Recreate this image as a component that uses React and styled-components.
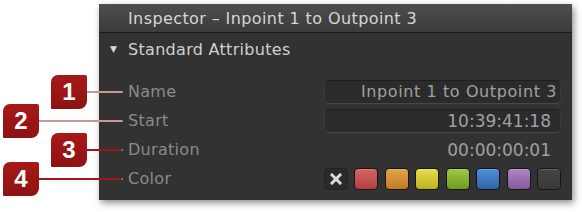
import React from "react";
import styled, { createGlobalStyle } from "styled-components";

const GlobalStyle = createGlobalStyle`
  html, body {
    margin: 0;
    padding: 0;
    background: #ffffff;
  }
  body {
    font-family: "DejaVu Sans", "Liberation Sans", sans-serif;
  }
`;

const Page = styled.div`
  width: 582px;
  height: 212px;
  padding: 4px 0 0 99px;
  box-sizing: border-box;
`;

const Panel = styled.div`
  width: 473px;
  height: 196px;
  background: #323232;
  box-shadow: 2px 3px 7px rgba(0, 0, 0, 0.45);
  display: flex;
  flex-direction: column;
`;

const TitleBar = styled.div`
  height: 28px;
  display: flex;
  align-items: center;
  padding-left: 29px;
  background: linear-gradient(#4e4e4e, #3b3b3b);
  border-bottom: 1px solid #1c1c1c;
  color: #d6d6d6;
  font-size: 16px;
  letter-spacing: 0.4px;
  white-space: nowrap;
`;

const SectionHeader = styled.div`
  height: 32px;
  display: flex;
  align-items: center;
  padding-left: 11px;
  color: #d0d0d0;
  font-size: 16px;
  letter-spacing: 0.3px;
`;

const Disclosure = styled.span`
  width: 18px;
  font-size: 9px;
  color: #d8d8d8;
`;

const Rows = styled.div`
  padding-top: 12px;
  display: flex;
  flex-direction: column;
`;

const Row = styled.div`
  position: relative;
  height: 29px;
  display: grid;
  grid-template-columns: 196px 237px;
  align-items: center;
  padding-left: 29px;
`;

const Label = styled.span`
  color: #8a8a8a;
  font-size: 16px;
  letter-spacing: 0.3px;
`;

const Field = styled.div`
  height: 24px;
  box-sizing: border-box;
  display: flex;
  align-items: center;
  justify-content: flex-end;
  padding-right: ${(p) => p.$pad}px;
  border-radius: 5px;
  background: #2b2b2b;
  border: 1px solid #3a3a3a;
  border-top-color: #1e1e1e;
  border-bottom-color: #474747;
  color: #a0a0a0;
  font-size: ${(p) => p.$size}px;
  letter-spacing: ${(p) => p.$track}px;
  white-space: nowrap;
  overflow: hidden;
`;

const Value = styled.div`
  text-align: right;
  padding-right: 10px;
  color: #a0a0a0;
  font-size: 17px;
`;

const Swatches = styled.div`
  display: flex;
  justify-content: space-between;
`;

const Swatch = styled.div`
  width: 24px;
  height: 22px;
  box-sizing: border-box;
  border-radius: 4px;
  border: 1px solid #161616;
  background: linear-gradient(
    ${(p) => p.$top},
    ${(p) => p.$bottom}
  );
  box-shadow: inset 0 1px 0 rgba(255, 255, 255, 0.18);
`;

const NoColor = styled.div`
  width: 24px;
  height: 22px;
  box-sizing: border-box;
  border-radius: 4px;
  border: 1px solid #222222;
  background: #2a2a2a;
  display: flex;
  align-items: center;
  justify-content: center;
`;

const Callout = styled.div`
  position: absolute;
  left: ${(p) => p.$left}px;
  right: calc(100% - 23px);
  top: 50%;
  transform: translateY(-50%);
  display: flex;
  align-items: center;
`;

const Badge = styled.div`
  width: 36px;
  height: 34px;
  flex: none;
  display: flex;
  align-items: center;
  justify-content: center;
  background: linear-gradient(#a81818, #8e1212);
  border-radius: 7px 2px 8px 1px;
  color: #ffffff;
  font-family: "Liberation Sans", Arial, sans-serif;
  font-weight: bold;
  font-size: 24px;
`;

const Leader = styled.div`
  flex: 1;
  height: 2px;
  background: ${(p) => p.$color};
  border-radius: 0 1px 1px 0;
  box-shadow: 1px 0 0 rgba(255, 255, 255, 0.55);
`;

const swatches = [
  ["#d86464", "#b04040"],
  ["#e4a448", "#c07c20"],
  ["#e6dc4c", "#c0b020"],
  ["#9cc844", "#6e9c20"],
  ["#5090dc", "#3062a8"],
  ["#b084c4", "#84589c"],
  ["#444444", "#383838"],
];

const rows = [
  { n: 1, left: -48, line: "#cf9494" },
  { n: 2, left: -96, line: "#cf9494" },
  { n: 3, left: -48, line: "#a01616" },
  { n: 4, left: -96, line: "#a01616" },
];

function CalloutMark({ row }) {
  return (
    <Callout $left={row.left}>
      <Badge>{row.n}</Badge>
      <Leader $color={row.line} />
    </Callout>
  );
}

export default function App() {
  return (
    <>
      <GlobalStyle />
      <Page>
        <Panel>
          <TitleBar>Inspector – Inpoint 1 to Outpoint 3</TitleBar>
          <SectionHeader>
            <Disclosure>▼</Disclosure>
            Standard Attributes
          </SectionHeader>
          <Rows>
            <Row>
              <CalloutMark row={rows[0]} />
              <Label>Name</Label>
              <Field $pad={3} $size={16} $track={0.6}>
                Inpoint 1 to Outpoint 3
              </Field>
            </Row>
            <Row>
              <CalloutMark row={rows[1]} />
              <Label>Start</Label>
              <Field $pad={9} $size={17} $track={0}>
                10:39:41:18
              </Field>
            </Row>
            <Row>
              <CalloutMark row={rows[2]} />
              <Label>Duration</Label>
              <Value>00:00:00:01</Value>
            </Row>
            <Row>
              <CalloutMark row={rows[3]} />
              <Label>Color</Label>
              <Swatches>
                <NoColor>
                  <svg width="12" height="12" viewBox="0 0 12 12">
                    <path
                      d="M2 2 L10 10 M10 2 L2 10"
                      stroke="#dcdcdc"
                      strokeWidth="3"
                      strokeLinecap="square"
                    />
                  </svg>
                </NoColor>
                {swatches.map(([top, bottom]) => (
                  <Swatch key={top} $top={top} $bottom={bottom} />
                ))}
              </Swatches>
            </Row>
          </Rows>
        </Panel>
      </Page>
    </>
  );
}
